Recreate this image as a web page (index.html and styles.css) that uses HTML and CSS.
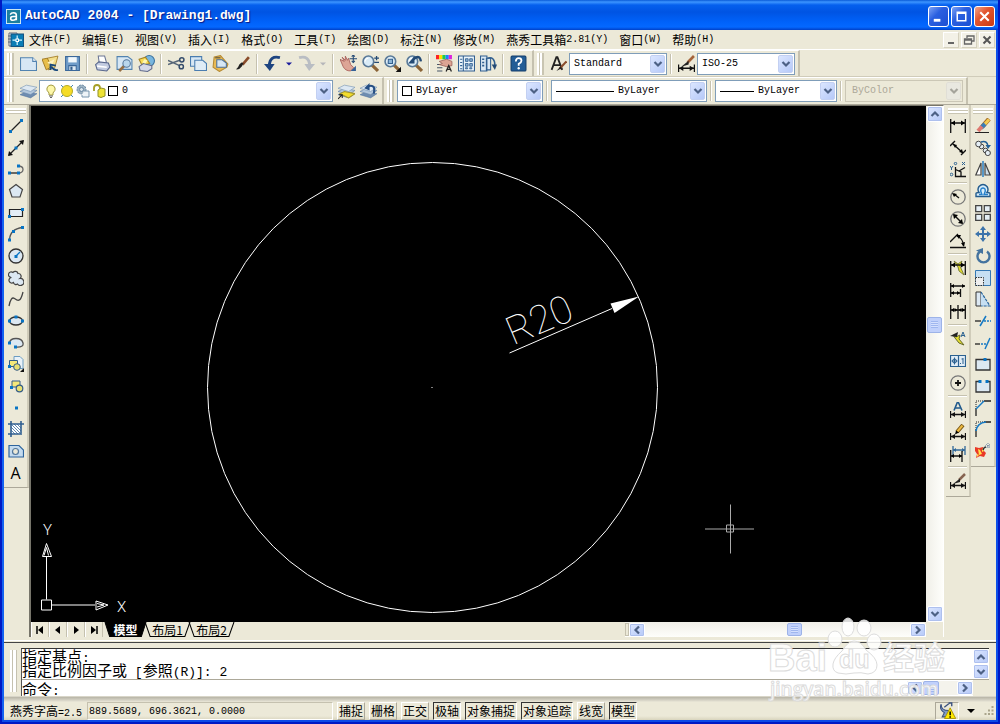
FILE: index.html
```html
<!DOCTYPE html>
<html lang="zh-CN">
<head>
  <meta charset="UTF-8" />
  <meta name="viewport" content="width=device-width, initial-scale=1.0" />
  <title>AutoCAD 2004 - [Drawing1.dwg]</title>
  <link rel="stylesheet" href="styles.css">
</head>
<body>
  <!-- Shared shapes -->
  <svg class="defs" width="0" height="0" aria-hidden="true">
    <symbol id="down" viewBox="0 0 10 10"><path d="M1.500 3 5 6.500 8.500 3" fill="none" stroke="#4d6185" stroke-width="2.200"/></symbol>
    <symbol id="up" viewBox="0 0 10 10"><path d="M1.500 7 5 3.500 8.500 7" fill="none" stroke="#4d6185" stroke-width="2.200"/></symbol>
    <symbol id="left" viewBox="0 0 10 10"><path d="M7 1.500 3.500 5 7 8.500" fill="none" stroke="#4d6185" stroke-width="2.200"/></symbol>
    <symbol id="right" viewBox="0 0 10 10"><path d="M3 1.500 6.500 5 3 8.500" fill="none" stroke="#4d6185" stroke-width="2.200"/></symbol>
    <symbol id="dim" viewBox="0 0 16 16"><path d="M.5 9v7M15.500 9v7M1 12.500h14" stroke="#111" fill="none" stroke-width="1.300"/><path d="M1 12.500l4-2.500v5zM15 12.500l-4-2.500v5z" fill="#111"/></symbol>
    <symbol id="layers" viewBox="0 0 16 16"><path d="M0 11l6-3 10 2-6 4z" fill="#6f8db0" stroke="#5577a0" stroke-width=".5"/><path d="M0 8l6-3 10 2-6 4z" fill="#b4c8dc" stroke="#6585aa" stroke-width=".6"/><path d="M0 5l6-3 10 2-6 4z" fill="#dde8f2" stroke="#7895b5" stroke-width=".6"/></symbol>
    <symbol id="lens" viewBox="0 0 16 16"><path d="M9 9l6 6" stroke="#8b6438" stroke-width="3"/><circle cx="6" cy="6" r="5" fill="#d9ebf7" stroke="#597998" stroke-width="1.500"/><path d="M3 6a3 3 0 0 1 3-3" stroke="#fff" fill="none"/></symbol>
  </svg>

  <div class="window">
    <header class="titlebar">
      <svg class="app-icon" viewBox="0 0 16 16"><rect x=".5" y=".5" width="15" height="15" fill="#1b7f9f" stroke="#d5eef5"/><path d="M4.500 6q1-2 3.500-2 3 0 3 2.500V12M11 8H7.500Q5 8 5 10t2.500 2Q10 12 11 10" fill="none" stroke="#fff" stroke-width="1.700"/></svg>
      <h1>AutoCAD 2004 - [Drawing1.dwg]</h1>
      <div class="win-btns">
        <button class="win-btn" aria-label="最小化"><svg viewBox="0 0 18 18"><path d="M4 13h7" stroke="#fff" stroke-width="3"/></svg></button>
        <button class="win-btn" aria-label="最大化"><svg viewBox="0 0 18 18"><path d="M4.500 4.500h9v9h-9z M4 5.500h10" fill="none" stroke="#fff" stroke-width="1.600"/></svg></button>
        <button class="win-btn close" aria-label="关闭"><svg viewBox="0 0 18 18"><path d="M4.500 4.500l9 9M13.500 4.500l-9 9" stroke="#fff" stroke-width="2.200"/></svg></button>
      </div>
    </header>

    <nav class="menubar">
      <svg class="doc-icon" viewBox="0 0 16 16"><path d="M1 1h8v13H1z" fill="#fff" stroke="#667"/><path d="M0 4h4M0 7h4M0 10h4" stroke="#567"/><rect x="3" y="2" width="12.500" height="12.500" fill="#0b7db5" stroke="#15537f"/><path d="M9.200 3.500v9.500M4.500 8.200h9.500" stroke="#d9f6ff" stroke-width="1.200"/><rect x="8" y="7" width="2.500" height="2.500" fill="#0b7db5" stroke="#fff"/></svg>
      <button class="menu">文件<span>(F)</span></button>
      <button class="menu">编辑<span>(E)</span></button>
      <button class="menu">视图<span>(V)</span></button>
      <button class="menu">插入<span>(I)</span></button>
      <button class="menu">格式<span>(O)</span></button>
      <button class="menu">工具<span>(T)</span></button>
      <button class="menu">绘图<span>(D)</span></button>
      <button class="menu">标注<span>(N)</span></button>
      <button class="menu">修改<span>(M)</span></button>
      <button class="menu">燕秀工具箱<span>2.81(Y)</span></button>
      <button class="menu">窗口<span>(W)</span></button>
      <button class="menu">帮助<span>(H)</span></button>
      <div class="mdi-btns">
        <button class="mdi-btn" aria-label="最小化图形"><svg viewBox="0 0 14 14"><path d="M4 10h6" stroke="#666" stroke-width="2"/></svg></button>
        <button class="mdi-btn" aria-label="还原图形"><svg viewBox="0 0 14 14"><path d="M5 5V3h7v5h-2M5 3h7M2.500 6h7v5h-7zM2.500 7h7" fill="none" stroke="#666" stroke-width="1.300"/></svg></button>
        <button class="mdi-btn" aria-label="关闭图形"><svg viewBox="0 0 14 14"><path d="M3.500 3.500l7 7M10.500 3.500l-7 7" stroke="#555" stroke-width="2"/></svg></button>
      </div>
    </nav>

    <!-- Standard + styles toolbars -->
    <div class="toolrow">
      <div class="toolbar">
        <i class="grip"></i>
        <button class="tool" aria-label="新建"><svg viewBox="0 0 16 16"><path d="M.5 2.500H12l3.500 3.500v8.500H.5z" fill="#d7e7f4" stroke="#5283b0"/><path d="M12 2.500V6h3.500" fill="#fff" stroke="#5283b0"/></svg></button>
        <button class="tool" aria-label="打开"><svg viewBox="0 0 16 16"><path d="M5 3l10-2-3 11-6 2z" fill="#f4df8b" stroke="#a07a22" stroke-width=".8"/><path d="M0 4l5-1 4 8-5 3z" fill="#e7bd49" stroke="#98701b" stroke-width=".8"/><path d="M5 7l7-3-3 6z" fill="#fff3c0"/><path d="M15 14q-4 1-6-3M8 14v-5l5 1" stroke="#18487c" stroke-width="1.700" fill="none"/></svg></button>
        <button class="tool" aria-label="保存"><svg viewBox="0 0 16 16"><path d="M1.500 1.500h13v13h-13z" fill="#6f9cc9" stroke="#3b689a"/><path d="M4 2h8v5H4z" fill="#f1f7fb"/><path d="M4.500 10h7v4.500h-7z" fill="#dce8f2" stroke="#3b689a"/><path d="M6 11h2v3H6z" fill="#315d8e"/></svg></button>
        <i class="sep"></i>
        <button class="tool" aria-label="打印"><svg viewBox="0 0 16 16"><path d="M4 1h6l2 7H5z" fill="#fff" stroke="#6c7795"/><path d="M1.500 9l3-2.500 9 1 1.500 4-3 3.500-9-1z" fill="#c2cbe0" stroke="#59678d"/><path d="M3 10.500l9 1" stroke="#fff" stroke-width="1.500"/></svg></button>
        <button class="tool" aria-label="打印预览"><svg viewBox="0 0 16 16"><path d="M1 1.500h10l4 3v9H1z" fill="#d7e7f4" stroke="#5283b0"/><path d="M9 9l-6 6" stroke="#966e43" stroke-width="2.500"/><circle cx="10" cy="8" r="3.500" fill="#b9d6ec" stroke="#55779a"/></svg></button>
        <button class="tool" aria-label="发布"><svg viewBox="0 0 16 16"><circle cx="10.500" cy="5.500" r="5" fill="#78b6df" stroke="#3a719e"/><path d="M1 4l6-2 4 6-7 2z" fill="#f7dc55" stroke="#a78424"/><path d="M1 11l4-3 8 2v3l-4 2.500-7-1z" fill="#d5d9e8" stroke="#616b8c"/><path d="M6 4l3 1-2 3-3-1z" fill="#fff6b0"/></svg></button>
        <i class="sep"></i>
        <button class="tool" aria-label="剪切"><svg viewBox="0 0 16 16"><path d="M0 5l11 5M0 9l11-4" stroke="#566678" stroke-width="1.400"/><circle cx="13" cy="4.500" r="2" fill="none" stroke="#344c6c" stroke-width="1.400"/><circle cx="12.500" cy="11" r="2" fill="none" stroke="#344c6c" stroke-width="1.400"/></svg></button>
        <button class="tool" aria-label="复制"><svg viewBox="0 0 16 16"><path d="M.5 1.500H11v9H.5z" fill="#d7e7f4" stroke="#4a7db0"/><path d="M4.500 5H12l3.500 3v6.500h-11z" fill="#dfecf6" stroke="#4a7db0"/></svg></button>
        <button class="tool" aria-label="粘贴"><svg viewBox="0 0 16 16"><path d="M2 2l6-1.500 7 8-1 3-7 4-6-4z" fill="#e9bb55" stroke="#b58b35"/><path d="M4.500 4.500h5l4 3v4h-9z" fill="#d7e7f4" stroke="#4a6f99"/><path d="M3 2.500h5" stroke="#7a6a43" stroke-width="1.500"/></svg></button>
        <button class="tool" aria-label="特性匹配"><svg viewBox="0 0 16 16"><path d="M14 2L8 9" stroke="#8a4c2b" stroke-width="2.500"/><path d="M9 7.500L7.500 10.500Q5 14 2 13.500q2-1.500 3-4.500L7 7z" fill="#222"/></svg></button>
        <i class="sep"></i>
        <button class="tool" aria-label="放弃"><svg viewBox="0 0 16 16"><path d="M15 2.500Q5.500 0 5 10" fill="none" stroke="#1d4480" stroke-width="2.800"/><path d="M0 8.500h10L5.500 15z" fill="#1d4480"/></svg></button>
        <button class="tool tiny" aria-label="放弃列表"><svg viewBox="0 0 8 8"><path d="M1 2.500h6L4 5.500z" fill="#17199b"/></svg></button>
        <button class="tool" aria-label="重做"><svg viewBox="0 0 16 16"><path d="M1 2.500Q10.500 0 11 10" fill="none" stroke="#b9bdc3" stroke-width="2.800"/><path d="M6 8.500h10L10.500 15z" fill="#b9bdc3"/></svg></button>
        <button class="tool tiny" aria-label="重做列表"><svg viewBox="0 0 8 8"><path d="M1 2.500h6L4 5.500z" fill="#b5b6b9"/></svg></button>
        <i class="sep"></i>
        <button class="tool" aria-label="实时平移"><svg viewBox="0 0 16 16"><path d="M0 4l4 2-2-4 3 3 0-4 2 4 1-2 2 6 3 3-3 3q-5 0-7-4z" fill="#dda596" stroke="#a75d59" stroke-width=".8"/><path d="M10 15l5-5v5z" fill="#335f96"/><path d="M12.500 0v7M9 3.500h7" stroke="#244a75"/><path d="M11 1.500L12.500 0 14 1.500M11 5.500L12.500 7 14 5.500" stroke="#244a75" fill="none"/></svg></button>
        <button class="tool" aria-label="实时缩放"><svg viewBox="0 0 16 16"><use href="#lens"/><path d="M11.500 3H16M13.700 1v4M11.500 7H16" stroke="#244a75" stroke-width="1.200"/></svg></button>
        <button class="tool" aria-label="窗口缩放"><svg viewBox="0 0 16 16"><use href="#lens"/><path d="M4 4h4v4H4z" fill="#8bb5d8" stroke="#335f8d"/><path d="M16 11v5h-5z" fill="#111"/></svg></button>
        <button class="tool" aria-label="缩放上一个"><svg viewBox="0 0 16 16"><use href="#lens"/><path d="M14 6Q13-1 7 4" fill="none" stroke="#244a75" stroke-width="2.200"/><path d="M8 1v7H2z" fill="#244a75"/></svg></button>
        <i class="sep"></i>
        <button class="tool" aria-label="特性"><svg viewBox="0 0 16 16"><path d="M0 0h3v4H0z" fill="#f22"/><path d="M3 0h3v4H3z" fill="#fd0"/><path d="M6 0h3v4H6z" fill="#2c4"/><path d="M9 0h3v4H9z" fill="#18f"/><path d="M12 0h3v4h-3z" fill="#d2d"/><path d="M1 9h5M1 12h5M1 15h5" stroke="#456"/><path d="M3 6l7-2 5 2v4l-5 1-7-2 3-1z" fill="#dca493" stroke="#955b53" stroke-width=".7"/><path d="M9.500 15.500L12 10l2.500 5.500M10.500 13.500h3" stroke="#222" stroke-width="1.200" fill="none"/></svg></button>
        <button class="tool" aria-label="设计中心"><svg viewBox="0 0 16 16"><path d="M.5 1h15v14H.5z" fill="#eaf4fa" stroke="#315f90"/><path d="M5 1v14" stroke="#315f90"/><path d="M2 4h2M2 7h2M2 10h2M2 13h2" stroke="#315f90"/><path d="M7 3.500h2.500v2.500H7zM11 3.500h2.500v2.500H11zM7 8h2.500v2.500H7zM11 8h2.500v2.500H11zM7 12h2v1H7zM11 12h2v1h-2z" fill="#8fb4d4" stroke="#315f90" stroke-width=".8"/></svg></button>
        <button class="tool" aria-label="工具选项板"><svg viewBox="0 0 16 16"><path d="M.5 1h6v14h-6zM6 3h4v11H6z" fill="#dbe9f4" stroke="#315f90"/><path d="M2 4h2M2 7h2M2 10h2" stroke="#315f90" stroke-width="1.500"/><path d="M7 3q7-2 7 7" fill="none" stroke="#315f90" stroke-width="1.500"/><path d="M11 9h5l-2 5z" fill="#244a75"/></svg></button>
        <i class="sep"></i>
        <button class="tool" aria-label="帮助"><svg viewBox="0 0 16 16"><rect x="1" y="1" width="14" height="14" rx="1" fill="#235d96" stroke="#123d6b"/><path d="M5.500 6q0-3 2.700-3 2.600 0 2.600 2.300 0 1.700-2.600 3V10" fill="none" stroke="#fff" stroke-width="1.700"/><circle cx="8.200" cy="12.500" r="1.100" fill="#fff"/></svg></button>
      </div>
      <div class="toolbar">
        <i class="grip"></i>
        <button class="tool" aria-label="文字样式"><svg viewBox="0 0 16 16"><path d="M1.500 14L6 2h1l4.500 12M3.500 9.500h6" fill="none" stroke="#222" stroke-width="1.700"/><path d="M15.500 6L9 13" stroke="#8a4c2b" stroke-width="2"/><path d="M10 10.500l-4 4.500 5-2.500z" fill="#222"/></svg></button>
        <label class="combo w98"><select aria-label="文字样式"><option>Standard</option></select><span class="arrow"><svg><use href="#down"/></svg></span></label>
        <i class="sep"></i>
        <button class="tool" aria-label="标注样式"><svg viewBox="0 0 16 16"><use href="#dim"/><path d="M15 1L9 7" stroke="#a5633a" stroke-width="2.500"/><path d="M10 5.500L3 11l7-2z" fill="#222"/></svg></button>
        <label class="combo w98"><select aria-label="标注样式"><option>ISO-25</option></select><span class="arrow"><svg><use href="#down"/></svg></span></label>
      </div>
    </div>

    <!-- Layers + properties toolbars -->
    <div class="toolrow">
      <div class="toolbar">
        <i class="grip"></i>
        <button class="tool" aria-label="图层特性管理器"><svg viewBox="0 0 16 16"><use href="#layers"/></svg></button>
        <label class="combo layer">
          <svg viewBox="0 0 14 14"><path d="M5 9q-3-3-2-5 1-3 4-3t4 3q1 2-2 5v2H5z" fill="#fdf7a9" stroke="#a39b43"/><path d="M5 12h4M6 13.500h2" stroke="#666"/></svg>
          <svg viewBox="0 0 14 14"><path d="M1 1l12 12M13 1L1 13" stroke="#4486b2"/><circle cx="7" cy="7" r="5.500" fill="#f5dc27" stroke="#b7ab24"/></svg>
          <svg viewBox="0 0 14 14"><circle cx="5.500" cy="5.500" r="4.500" fill="#9eb3c2" stroke="#6888a5" stroke-dasharray="2 1"/><circle cx="5.500" cy="5.500" r="2" fill="#dbe5ec" stroke="#6888a5"/><path d="M8 7h5v6H6v-2" fill="#eef4f8" stroke="#7794ad"/></svg>
          <svg viewBox="0 0 14 14"><path d="M2 7V4q0-3 3-3t3 3v3" fill="none" stroke="#a69f26" stroke-width="1.800"/><path d="M6 6l3-2 4 1v7l-4 1.500-3-1z" fill="#eee337" stroke="#929027"/></svg>
          <i class="swatch"></i>
          <select aria-label="图层"><option>0</option></select><span class="arrow"><svg><use href="#down"/></svg></span>
        </label>
        <i class="gap"></i>
        <button class="tool" aria-label="将对象的图层置为当前"><svg viewBox="0 0 16 16"><use href="#layers"/><path d="M2 10l4-2 10 2-6 4z" fill="#f2dd2e" stroke="#a4942d"/><path d="M0 15l4-4m-3 0h3v3" stroke="#222" fill="none"/></svg></button>
        <button class="tool" aria-label="上一个图层"><svg viewBox="0 0 16 16"><use href="#layers"/><path d="M13 10Q15 1 8 3" fill="none" stroke="#254e83" stroke-width="2"/><path d="M9 0v7L4 5z" fill="#254e83"/></svg></button>
      </div>
      <div class="toolbar">
        <i class="grip"></i>
        <label class="combo w146"><i class="swatch"></i><select aria-label="颜色"><option>ByLayer</option></select><span class="arrow"><svg><use href="#down"/></svg></span></label>
        <i class="sep"></i>
        <label class="combo w156"><i class="line long"></i><select aria-label="线型"><option>ByLayer</option></select><span class="arrow"><svg><use href="#down"/></svg></span></label>
        <i class="sep"></i>
        <label class="combo w122"><i class="line"></i><select aria-label="线宽"><option>ByLayer</option></select><span class="arrow"><svg><use href="#down"/></svg></span></label>
        <i class="sep"></i>
        <label class="combo w118 off"><select aria-label="打印样式" disabled><option>ByColor</option></select><span class="arrow"><svg><use href="#down"/></svg></span></label>
      </div>
    </div>

    <main class="workspace">
      <!-- Draw toolbar -->
      <div class="palette draw">
        <i class="grip"></i>
        <button class="tool" aria-label="直线"><svg viewBox="0 0 16 16"><path d="M2 14L14 2" stroke="#222" stroke-width="1.300"/><path d="M1 12h3v3H1zM12 1h3v3h-3z" fill="#0874c4"/></svg></button>
        <button class="tool" aria-label="构造线"><svg viewBox="0 0 16 16"><path d="M1 15L15 1" stroke="#222" stroke-width="1.300"/><path d="M0 16l1-5 4 4zM16 0l-5 1 4 4z" fill="#111"/><path d="M6.500 6.500h3v3h-3z" fill="#0874c4"/></svg></button>
        <button class="tool" aria-label="多段线"><svg viewBox="0 0 16 16"><path d="M1 12h9" stroke="#222" stroke-width="1.300"/><path d="M10 12q5 0 5-3.500T10 5" fill="none" stroke="#666" stroke-width="1.300"/><path d="M0 10.500h3v3H0zM9 10.500h3v3H9zM9 3.500h3v3H9z" fill="#0874c4"/></svg></button>
        <button class="tool" aria-label="正多边形"><svg viewBox="0 0 16 16"><path d="M8 1.500l6.500 5L12 14H4L1.500 6.500z" fill="#dce8f2" stroke="#444" stroke-width="1.200"/></svg></button>
        <button class="tool" aria-label="矩形"><svg viewBox="0 0 16 16"><path d="M1.500 4.500h13v7h-13z" fill="#e3edf6" stroke="#222" stroke-width="1.200"/><path d="M0 10h3v3H0zM13 3h3v3h-3z" fill="#0874c4"/></svg></button>
        <button class="tool" aria-label="圆弧"><svg viewBox="0 0 16 16"><path d="M1.500 14Q2 3 14.500 1.500" fill="none" stroke="#555" stroke-width="1.300"/><path d="M0 12.500h3v3H0zM4 4h3v3H4zM13 0h3v3h-3z" fill="#0874c4"/></svg></button>
        <button class="tool" aria-label="圆"><svg viewBox="0 0 16 16"><circle cx="8" cy="8" r="7" fill="#dce8f2" stroke="#333" stroke-width="1.300"/><path d="M8 8l4-4" stroke="#0874c4" stroke-width="1.300"/><path d="M6.500 7h3v3h-3z" fill="#0874c4"/></svg></button>
        <button class="tool" aria-label="修订云线"><svg viewBox="0 0 16 16"><path d="M3.500 7.500A2.800 2.800 0 1 1 5 2.500 2.800 2.800 0 0 1 10 3.500 2.800 2.800 0 0 1 12 8.500 3.500 3.500 0 1 1 9.500 14 2.500 2.500 0 0 1 5.500 12.500 2.800 2.800 0 1 1 3.500 7.500z" fill="#dce8f2" stroke="#444" stroke-width="1.200"/></svg></button>
        <button class="tool" aria-label="样条曲线"><svg viewBox="0 0 16 16"><path d="M1 15Q3 5 6.500 7.500T11 9q2 0 4-8" fill="none" stroke="#444" stroke-width="1.300"/></svg></button>
        <button class="tool" aria-label="椭圆"><svg viewBox="0 0 16 16"><ellipse cx="8" cy="8" rx="6.500" ry="4" fill="#dce8f2" stroke="#333" stroke-width="1.300"/><path d="M0 6.500h3v3H0zM13 6.500h3v3h-3zM6.500 2.500h3v3h-3z" fill="#0874c4"/></svg></button>
        <button class="tool" aria-label="椭圆弧"><svg viewBox="0 0 16 16"><path d="M1.500 8Q2 3.500 8 3.500T15 8t-7 4" fill="#dce8f2" stroke="#555" stroke-width="1.300"/><path d="M0 6.500h3v3H0zM6 10.500h3v3H6z" fill="#0874c4"/></svg></button>
        <button class="tool" aria-label="插入块"><svg viewBox="0 0 16 16"><path d="M6 .5h6l3 3v9H6z" fill="#e8f1f8" stroke="#6b9cc2"/><path d="M1.500 4.500h8v6h-8z" fill="#f4e879" stroke="#345d86"/><circle cx="9" cy="11" r="3.300" fill="#e8df71" stroke="#345d86"/><path d="M0 9h3v3H0z" fill="#0874c4"/><path d="M16 12v4h-4z" fill="#111"/></svg></button>
        <button class="tool" aria-label="创建块"><svg viewBox="0 0 16 16"><path d="M4 3h8v6H4z" fill="#f4e879" stroke="#345d86"/><circle cx="11.500" cy="10.500" r="3.300" fill="#e8df71" stroke="#345d86" stroke-width="1.200"/><path d="M2 8h3v3H2z" fill="#0874c4"/></svg></button>
        <button class="tool" aria-label="点"><svg viewBox="0 0 16 16"><path d="M7 6.500h3v3H7z" fill="#0874c4"/></svg></button>
        <button class="tool" aria-label="图案填充"><svg viewBox="0 0 16 16"><path d="M3 3h10v10H3z" fill="#fff"/><path d="M3 6l7 7M3 9l4 4M6 3l7 7M9 3l4 4M3 3l10 10" stroke="#4e7dab" stroke-width=".9"/><path d="M3 0v16M13 0v12M0 3h16M0 13h14" stroke="#315f90" stroke-width="1.600"/></svg></button>
        <button class="tool" aria-label="面域"><svg viewBox="0 0 16 16"><path d="M1 2.500h10l4.500 4.500v7H1z" fill="#c4dbef" stroke="#2e659e" stroke-width="1.200"/><circle cx="7.500" cy="8.500" r="3" fill="#ece9d8" stroke="#52779c" stroke-width="1.200"/></svg></button>
        <button class="tool letter" aria-label="多行文字">A</button>
      </div>

      <div class="doc">
        <div class="view">
          <svg class="drawing" viewBox="31 106 895 515" preserveAspectRatio="xMidYMid meet">
            <circle cx="432.500" cy="387" r="225" class="thin"/>
            <path d="M431.500 387h1" class="thin"/>
            <path d="M509.500 352.500L612 308" class="thin"/>
            <path d="M639 296l-28.500 7 4 9.500z" fill="#fff"/>
            <text class="dim-text" transform="translate(513 345) rotate(-23)">R20</text>

            <!-- UCS icon -->
            <path d="M41.500 599.500h10v10h-10zM46.500 599v-43M46.500 543l-4 13h9zM52 604.500h43M108 604.500l-12-4v9zM44 555l2.500-8 2 8M97 603l7 1.500-7 2" class="thin"/>
            <text class="axis" x="43" y="534">Y</text>
            <text class="axis" x="117" y="611">X</text>

            <!-- Crosshair -->
            <path d="M705 528.500h49M730.500 504v49M726.500 524.500h7v7h-7z" class="cross"/>
          </svg>
          <div class="vscroll">
            <button class="sbtn" aria-label="向上"><svg><use href="#up"/></svg></button>
            <i class="thumb"></i>
            <button class="sbtn" aria-label="向下"><svg><use href="#down"/></svg></button>
          </div>
        </div>
        <div class="tabs">
          <button class="nav" aria-label="第一个"><svg viewBox="0 0 10 10"><path d="M2 1v8" stroke="#000" stroke-width="1.500"/><path d="M8 1v8L3 5z"/></svg></button>
          <button class="nav" aria-label="上一个"><svg viewBox="0 0 10 10"><path d="M7 1v8L2 5z"/></svg></button>
          <button class="nav" aria-label="下一个"><svg viewBox="0 0 10 10"><path d="M3 1v8l5-4z"/></svg></button>
          <button class="nav" aria-label="最后一个"><svg viewBox="0 0 10 10"><path d="M8 1v8" stroke="#000" stroke-width="1.500"/><path d="M2 1v8l5-4z"/></svg></button>
          <button class="tab active"><svg viewBox="0 0 46 14" preserveAspectRatio="none"><path d="M1 0l5 13.500h34L45 0"/></svg><span>模型</span></button>
          <button class="tab"><svg viewBox="0 0 46 14" preserveAspectRatio="none"><path d="M1 0l5 13.500h34L45 0"/></svg><span>布局1</span></button>
          <button class="tab"><svg viewBox="0 0 46 14" preserveAspectRatio="none"><path d="M1 0l5 13.500h34L45 0"/></svg><span>布局2</span></button>
          <div class="hscroll">
            <i class="split"></i>
            <button class="sbtn" aria-label="向左"><svg><use href="#left"/></svg></button>
            <i class="thumb"></i>
            <button class="sbtn" aria-label="向右"><svg><use href="#right"/></svg></button>
          </div>
        </div>
      </div>

      <!-- Dimension toolbar -->
      <div class="palette dims">
        <i class="grip"></i>
        <button class="tool" aria-label="线性标注"><svg viewBox="0 0 16 16"><path d="M.7 1v14M15.300 1v14M1 5h14" stroke="#111" stroke-width="1.300"/><path d="M1 5l4-2.500v5zM15 5l-4-2.500v5z"/></svg></button>
        <button class="tool" aria-label="对齐标注"><svg viewBox="0 0 16 16"><path d="M3 4l10 9M0 6l5-5M11 15l5-5" stroke="#111" stroke-width="1.400"/><path d="M3 4l4 1-2 3zM13 13l-4-1 3-3z"/></svg></button>
        <button class="tool" aria-label="坐标标注"><svg viewBox="0 0 16 16"><path d="M5.500 5v9.500H16M5.500 7.500L11 10v4.500M9 9l6-3.500" fill="none" stroke="#111" stroke-width="1.300"/><path d="M0 4l1.500 2L3 4M1.500 6v2M12 0l3 3M15 0l-3 3" stroke="#2b6190" fill="none"/><circle cx="1.500" cy="12.500" r="1.300" fill="none" stroke="#2b6190"/><circle cx="5.500" cy="1.500" r="1.200" fill="none" stroke="#2b6190"/></svg></button>
        <i class="hsep"></i>
        <button class="tool" aria-label="半径标注"><svg viewBox="0 0 16 16"><circle cx="8" cy="8" r="7.200" fill="none" stroke="#777" stroke-width="1.300"/><path d="M9 9L4 5" stroke="#111" stroke-width="1.400"/><path d="M2 4l5 1-3 3z"/></svg></button>
        <button class="tool" aria-label="直径标注"><svg viewBox="0 0 16 16"><circle cx="8" cy="8" r="7.200" fill="none" stroke="#777" stroke-width="1.300"/><path d="M4 4l8 8" stroke="#111" stroke-width="1.400"/><path d="M3 3l5 1-4 4zM13 13l-5-1 4-4z"/></svg></button>
        <button class="tool" aria-label="角度标注"><svg viewBox="0 0 16 16"><path d="M0 14.500h16M0 9l8-8M7 3q6 2 6.500 10" fill="none" stroke="#111" stroke-width="1.300"/><path d="M6 2l5 0-2 4zM14 14l-3-4 4-1z"/></svg></button>
        <i class="hsep"></i>
        <button class="tool" aria-label="快速标注"><svg viewBox="0 0 16 16"><path d="M4 1l4 3 4-3-2 5 4 9-5-4-1-4z" fill="#e4df2f" stroke="#66682b" stroke-width=".8"/><path d="M.7 1v14M15.300 1v14M1 5h14" stroke="#111" stroke-width="1.300"/><path d="M1 5l4-2.500v5zM15 5l-4-2.500v5z"/></svg></button>
        <button class="tool" aria-label="基线标注"><svg viewBox="0 0 16 16"><path d="M.7 1v14M1 4h14M1 11h9M10.500 7v8" stroke="#111" stroke-width="1.300"/><path d="M1 4l3-2v4zM15 4l-3-2v4zM1 11l3-2v4zM10 11l-3-2v4z"/></svg></button>
        <button class="tool" aria-label="连续标注"><svg viewBox="0 0 16 16"><path d="M.7 1v14M8 1v14M15.300 1v14M1 6h14" stroke="#111" stroke-width="1.300"/><path d="M1 6l3-2v4zM15 6l-3-2v4zM7.500 6l-3-2v4zM8.500 6l3-2v4z"/></svg></button>
        <i class="hsep"></i>
        <button class="tool" aria-label="快速引线"><svg viewBox="0 0 16 16"><path d="M3 4l3 2 4-2-1 4 5 6-5-2-4-5z" fill="#e4df2f" stroke="#66682b"/><path d="M0 5l8-4-1 5z" fill="#222"/><path d="M11 6l2-5 2 5M12 4.500h2.500" stroke="#2b6190" fill="none"/></svg></button>
        <button class="tool" aria-label="公差"><svg viewBox="0 0 16 16"><path d="M.5 2.500h15v11H.5zM8.500 2.500v11" fill="#e1edf6" stroke="#2b6190" stroke-width="1.200"/><circle cx="4.500" cy="8" r="2" fill="none" stroke="#2b6190"/><path d="M4.500 4.500v7M1.500 8h6M10 10.500h1M13 5v6M11.500 6H13" stroke="#2b6190" fill="none"/></svg></button>
        <button class="tool" aria-label="圆心标记"><svg viewBox="0 0 16 16"><circle cx="8" cy="8" r="7.200" fill="none" stroke="#777" stroke-width="1.300"/><path d="M8 5v6M5 8h6" stroke="#111" stroke-width="1.800"/></svg></button>
        <i class="hsep"></i>
        <button class="tool" aria-label="编辑标注"><svg viewBox="0 0 16 16"><use href="#dim"/><path d="M4 8.500L7.500 0h.7L12 8.500M5.500 6h5" fill="none" stroke="#225a8c" stroke-width="1.600"/></svg></button>
        <button class="tool" aria-label="编辑标注文字"><svg viewBox="0 0 16 16"><use href="#dim"/><path d="M13 1L7 8" stroke="#775512" stroke-width="4"/><path d="M12.500 1.500L7 8" stroke="#eebb42" stroke-width="2"/><path d="M5 10.500l1-4 3 2z"/></svg></button>
        <button class="tool" aria-label="标注更新"><svg viewBox="0 0 16 16"><path d="M3 0v9M15 0v9M3 4h12" stroke="#326999" stroke-width="1.300"/><path d="M3 4l3-2v4zM15 4l-3-2v4z" fill="#326999"/><path d="M.7 4v12M12 5v11M1 10h11" stroke="#111" stroke-width="1.300"/><path d="M1 10l3-2v4zM12 10L9 8v4z"/></svg></button>
        <i class="hsep"></i>
        <button class="tool" aria-label="标注样式管理"><svg viewBox="0 0 16 16"><use href="#dim"/><path d="M15 1L9 7" stroke="#876451" stroke-width="2.500"/><path d="M10 5.500L3 11l7-2z" fill="#222"/></svg></button>
      </div>

      <!-- Modify toolbar -->
      <div class="palette modify">
        <i class="grip"></i>
        <button class="tool" aria-label="删除"><svg viewBox="0 0 16 16"><path d="M14 1L7 9" stroke="#a36b24" stroke-width="4.500"/><path d="M14 1.500L9 7" stroke="#f4cb52" stroke-width="3"/><path d="M10 6L6 10" stroke="#397bb8" stroke-width="4"/><path d="M7 8.500L3 13" stroke="#df7970" stroke-width="4"/><path d="M0 14.500h14" stroke="#222"/></svg></button>
        <button class="tool" aria-label="复制对象"><svg viewBox="0 0 16 16"><circle cx="6.500" cy="6.500" r="2.300" fill="#e5eef5" stroke="#444"/><circle cx="3.500" cy="4" r="2.800" fill="#e5eef5" stroke="#444"/><circle cx="10.500" cy="10.500" r="2.300" fill="#e5eef5" stroke="#444"/><circle cx="12.800" cy="13" r="2.600" fill="#e5eef5" stroke="#444"/><path d="M6 2q6-2 7 4" fill="none" stroke="#235f96" stroke-width="1.500"/><path d="M10.500 5H16l-3 4z" fill="#235f96"/></svg></button>
        <button class="tool" aria-label="镜像"><svg viewBox="0 0 16 16"><path d="M6 2v12H.8z" fill="#fff" stroke="#444" stroke-width="1.200"/><path d="M10 2v12h5.200z" fill="#cbdce9" stroke="#444" stroke-width="1.200"/><path d="M8 0v16" stroke="#1b76c1" stroke-width="1.400"/></svg></button>
        <button class="tool" aria-label="偏移"><svg viewBox="0 0 16 16"><path d="M1 13.500h14v-3q0-1-3-1 2-3 0-6-4-4-8 0-2 3 0 6-3 0-3 1z" fill="#d8edfb" stroke="#235b8d" stroke-width="1.400"/><path d="M4 11.500h3Q5 8 6 6q2-2 4 0 1 2-1 5.500h4" fill="none" stroke="#2681cb" stroke-width="1.300"/></svg></button>
        <button class="tool" aria-label="阵列"><svg viewBox="0 0 16 16"><path d="M.7.7h6v6h-6zM9.300.7h6v6h-6zM.7 9.300h6v6h-6zM9.300 9.300h6v6h-6z" fill="#e5eef5" stroke="#444" stroke-width="1.300"/></svg></button>
        <button class="tool" aria-label="移动"><svg viewBox="0 0 16 16"><path d="M8 2v12M2 8h12" stroke="#3c73ab" stroke-width="2"/><path d="M8 0l3 4H5zM8 16l3-4H5zM0 8l4-3v6zM16 8l-4-3v6z" fill="#3c73ab"/></svg></button>
        <button class="tool" aria-label="旋转"><svg viewBox="0 0 16 16"><path d="M5 3.500a6 6 0 1 0 7 0" fill="none" stroke="#44739f" stroke-width="2.400"/><path d="M1 2.500L8 0v6z" fill="#44739f"/></svg></button>
        <button class="tool" aria-label="缩放"><svg viewBox="0 0 16 16"><path d="M.5.500h15v15H.5z" fill="#c6dff2" stroke="#3578b4"/><path d="M.5 7.500h8v8h-8z" fill="#eee" stroke="#333" stroke-dasharray="1.500 1"/></svg></button>
        <button class="tool" aria-label="拉伸"><svg viewBox="0 0 16 16"><path d="M1 1h5v14H1z" fill="#dce8f2" stroke="#333"/><path d="M6 1l9 14H6" fill="#c6dff2" stroke="#28649b" stroke-width="1.200" stroke-dasharray="3 1"/></svg></button>
        <button class="tool" aria-label="修剪"><svg viewBox="0 0 16 16"><path d="M0 8h6" stroke="#222" stroke-width="1.300"/><path d="M9 8h7" stroke="#167ac4" stroke-width="1.300" stroke-dasharray="2 1"/><path d="M5 13L11 3" stroke="#167ac4" stroke-width="1.500"/></svg></button>
        <button class="tool" aria-label="延伸"><svg viewBox="0 0 16 16"><path d="M0 9h5" stroke="#222" stroke-width="1.300"/><path d="M6 9h6" stroke="#167ac4" stroke-width="1.300" stroke-dasharray="2 1"/><path d="M10 14L15 3" stroke="#167ac4" stroke-width="1.500"/></svg></button>
        <button class="tool" aria-label="打断于点"><svg viewBox="0 0 16 16"><path d="M1 3.500h14v10.500H1z" fill="#dce8f2" stroke="#333" stroke-width="1.300"/><path d="M8.500 2h3v3h-3z" fill="#0874c4"/></svg></button>
        <button class="tool" aria-label="打断"><svg viewBox="0 0 16 16"><path d="M4 3.500H1V14h14V3.500h-3" fill="#dce8f2" stroke="#333" stroke-width="1.300"/><path d="M3.500 2h3v3h-3zM10.500 2h3v3h-3z" fill="#0874c4"/></svg></button>
        <button class="tool" aria-label="倒角"><svg viewBox="0 0 16 16"><path d="M1 8v8M9 1h7" stroke="#222" stroke-width="1.300"/><path d="M1 7V1h7" fill="none" stroke="#222" stroke-dasharray="1 1"/><path d="M1 9l8-8" stroke="#167ac4" stroke-width="1.500"/></svg></button>
        <button class="tool" aria-label="圆角"><svg viewBox="0 0 16 16"><path d="M1 8v8M9 1h7" stroke="#222" stroke-width="1.300"/><path d="M1 7V1h7" fill="none" stroke="#222" stroke-dasharray="1 1"/><path d="M1 10q1-8 10-9" fill="none" stroke="#167ac4" stroke-width="1.700"/></svg></button>
        <button class="tool" aria-label="分解"><svg viewBox="0 0 16 16"><path d="M0 4l4 1 4-1 1 4 2 2-2 4-4-1-4 2 1-4-2-3z" fill="#e93827"/><path d="M3 6l2 1 2 4-3 1zM7 5l2 3-2 1zM2 11l2 1-2 2z" fill="#ffe14b"/><path d="M8 7q1-3 3-3" fill="none" stroke="#333" stroke-width="1.500"/><path d="M11 1l4 4M15 1l-4 4M13 0v6M10 3h6" stroke="#6d87a7" stroke-dasharray="1 1"/></svg></button>
      </div>
    </main>

    <section class="command">
      <i class="grip"></i>
      <div class="console">
        <div class="history">
          <div class="log">
            <p>指定基点<span>:</span></p>
            <p>指定比例因子或<span> [</span>参照<span>(R)]: 2</span></p>
          </div>
          <div class="log-scroll">
            <button class="sbtn" aria-label="向上滚动"><svg><use href="#up"/></svg></button>
            <button class="sbtn" aria-label="向下滚动"><svg><use href="#down"/></svg></button>
          </div>
        </div>
        <div class="prompt">
          <label for="cmd">命令<span>:</span></label>
          <input type="text" id="cmd" />
          <div class="cmd-scroll">
            <button class="sbtn" aria-label="向左滚动"><svg><use href="#left"/></svg></button>
            <i class="thumb"></i>
            <button class="sbtn" aria-label="向右滚动"><svg><use href="#right"/></svg></button>
          </div>
        </div>
      </div>
    </section>

    <footer class="status">
      <span class="height">燕秀字高<span>=2.5</span></span>
      <output class="coords">889.5689, 696.3621, 0.0000</output>
      <button class="mode">捕捉</button>
      <button class="mode">栅格</button>
      <button class="mode">正交</button>
      <button class="mode on">极轴</button>
      <button class="mode on">对象捕捉</button>
      <button class="mode on">对象追踪</button>
      <button class="mode">线宽</button>
      <button class="mode on">模型</button>
      <div class="tray">
        <button class="tray-icon" aria-label="通讯中心"><svg viewBox="0 0 16 16"><path d="M2 2q0 6 7 6l2 3-2 3H3l2-4Q0 7 2 2z" fill="#8299c5" stroke="#3a517f"/><path d="M5 5l5-4M9 1h3v3" fill="none" stroke="#3a517f" stroke-width="1.300"/><path d="M10.500 5.500l5.200 10H5.200z" fill="#ffe900" stroke="#a18d00" stroke-width=".8"/><path d="M10.500 9v3.500M10.500 13.500v1.300" stroke="#000" stroke-width="1.400"/></svg></button>
        <button class="tray-menu" aria-label="状态栏菜单"><svg viewBox="0 0 8 8"><path d="M0 2h8L4 6z"/></svg></button>
        <svg class="resize" viewBox="0 0 12 12"><path d="M8.500 2h2M5 5.500h2M8.500 5.500h2M1.500 9h2M5 9h2M8.500 9h2" stroke="#aaa58c" stroke-width="2"/></svg>
      </div>
    </footer>
  </div>

  <!-- Watermark -->
  <svg class="mark" viewBox="0 0 190 90">
    <ellipse cx="67" cy="25" rx="7" ry="8"/>
    <ellipse cx="80" cy="13" rx="6" ry="9"/>
    <ellipse cx="96" cy="14" rx="7" ry="8"/>
    <ellipse cx="106" cy="28" rx="7" ry="8"/>
    <path d="M86 27q7 0 12 9 11 8 11 15 0 8-9 9-7-2-14-1-8 2-16 0-6-2-5-9 1-6 9-13 6-10 12-10z"/>
    <text class="brand" x="0" y="57">Bai</text>
    <text class="paw" x="71" y="54">du</text>
    <text class="cn" x="115" y="55">经验</text>
    <text class="url" x="2" y="82">jingyan.baidu.com</text>
  </svg>
</body>
</html>
```
FILE: styles.css
```css
:root {
  --face: #ece9d8;
  --shade: #aca899;
  --field: #7f9db9;
  --mono: "Liberation Mono", monospace;
  --cjk: "Noto Sans CJK SC", sans-serif;
}

* { margin: 0; padding: 0; box-sizing: border-box; }

body {
  position: relative;
  min-height: 100vh;
  display: flex;
  background: #0019c4;
  border: 2px solid #0019c4;
  border-top: 0;
  font-family: var(--cjk);
  font-size: 12px;
  line-height: 14px;
  color: #000;
}

button, input, select {
  font: inherit;
  color: inherit;
  background: none;
  border: 0;
  border-radius: 0;
}
button { display: flex; align-items: center; justify-content: center; }
svg { display: block; }
i { display: block; flex: none; }
.defs { position: absolute; }

.window {
  flex: 1;
  min-width: 0;
  display: flex;
  flex-direction: column;
  background: linear-gradient(90deg, #1462f0 2px, var(--face) 2px, var(--face) calc(100% - 2px), #0d4fe8 calc(100% - 2px));
  border-bottom: 2px solid #0c4ae6;
}
.window > * { margin: 0 2px; }

/* Title bar */
.window > .titlebar {
  margin: 0;
  height: 30px;
  display: flex;
  align-items: center;
  gap: 4px;
  padding: 2px 3px 0 4px;
  background: linear-gradient(#0a5bd8 0, #3d95ff 2px, #0560ee 5px, #0054e3 12px, #0062fa 22px, #0468ff 27px, #0040c8 30px);
}
.app-icon { width: 15px; height: 15px; }
.titlebar h1 {
  flex: 1;
  font: bold 13px/16px var(--mono);
  color: #fff;
  text-shadow: 1px 1px 1px #0a1883;
}
.win-btns { display: flex; gap: 2px; }
.win-btn {
  width: 21px;
  height: 21px;
  border: 1px solid #fff;
  border-radius: 3px;
  background: linear-gradient(135deg, #7ea3f5, #2a5fe0 40%, #1b4fd2);
}
.win-btn svg { width: 17px; height: 17px; }
.win-btn.close { background: linear-gradient(135deg, #f0a58c, #e2552f 40%, #c83a12); }

/* Menu bar */
.menubar {
  height: 20px;
  display: flex;
  align-items: center;
  gap: 11px;
  padding-left: 4px;
  border-bottom: 1px solid #fff;
}
.doc-icon { width: 16px; height: 16px; margin-right: -6px; }
.menu { height: 18px; white-space: nowrap; }
.menu span { font: 10px/14px var(--mono); }
.mdi-btns { display: flex; gap: 2px; margin-left: auto; padding-right: 1px; }
.mdi-btn {
  width: 16px;
  height: 16px;
  background: #f3f1e7;
  border: 1px solid #fff;
  border-right-color: #d4d0be;
  border-bottom-color: #d4d0be;
}
.mdi-btn svg { width: 14px; height: 14px; }

/* Toolbars */
.toolrow { height: 27px; display: flex; border-bottom: 1px solid #d0ccba; }
.toolrow + .toolrow { height: 28px; border-bottom-color: var(--shade); }
.toolbar {
  display: flex;
  align-items: center;
  padding: 0 3px;
  border-top: 1px solid #fff;
  border-right: 2px solid #c5c1af;
}
.toolbar .grip {
  width: 7px;
  height: 22px;
  margin-right: 3px;
  border: 1px solid #c9c5b2;
  border-left-color: #fff;
  border-width: 0 2px 0 2px;
  background: linear-gradient(90deg, #c9c5b2 1px, #fff 1px);
}
.tool { flex: none; width: 22px; height: 22px; }
.tool svg { width: 17px; height: 17px; }
.tool.tiny { width: 12px; }
.tool.tiny svg { width: 8px; height: 8px; }
.sep { width: 2px; height: 20px; margin: 0 3px; border-left: 1px solid #c5c1af; border-right: 1px solid #fff; }
.gap { width: 2px; }

.combo {
  display: flex;
  align-items: center;
  gap: 2px;
  height: 22px;
  padding: 1px 1px 1px 4px;
  background: #fff;
  border: 1px solid var(--field);
}
.combo > svg { flex: none; width: 14px; height: 14px; }
.combo select {
  flex: 1;
  min-width: 0;
  appearance: none;
  font: 10px/14px var(--mono);
  opacity: 1;
}
.combo .arrow, .sbtn {
  flex: none;
  display: flex;
  align-items: center;
  justify-content: center;
  background: linear-gradient(135deg, #dbe6ff, #b6c9f8);
  border: 1px solid #c3d0f2;
  border-radius: 2px;
}
.combo .arrow { width: 15px; height: 18px; }
.arrow svg, .sbtn svg { width: 10px; height: 10px; }
.w98 { width: 98px; }
.w118 { width: 118px; }
.w122 { width: 122px; }
.w146 { width: 146px; }
.w156 { width: 156px; }
.layer { width: 294px; }
.swatch { width: 10px; height: 10px; border: 1px solid #000; margin-right: 2px; }
.line { width: 34px; height: 1px; background: #000; margin-right: 2px; }
.line.long { width: 58px; }
.combo.off { padding-left: 6px; background: var(--face); border-color: #cbc7b6; color: #aca899; }
.combo.off .arrow { background: #ece9d8; border-color: #d9d5c4; opacity: 0.5; filter: grayscale(1); }

/* Workspace */
.workspace { flex: 1; display: flex; align-items: flex-start; min-height: 0; }
.palette {
  flex: none;
  width: 25px;
  display: flex;
  flex-direction: column;
  align-items: center;
  padding: 3px 0 4px;
  border-right: 2px solid #d0ccba;
  border-bottom: 1px solid var(--shade);
}
.palette .grip {
  width: 20px;
  height: 6px;
  margin-bottom: 1px;
  border: 0 solid #c9c5b2;
  border-bottom-width: 1px;
  background: linear-gradient(#fff 2px, #c9c5b2 2px, #c9c5b2 3px, #fff 3px);
}
/* icon rows run slightly under 22px on the long bars */
.draw .tool:nth-child(3n), .modify .tool:nth-child(3n) { height: 21px; }
.palette .tool svg { width: 16px; height: 16px; }
.tool.letter { font: 500 16px/20px "Open Sans", sans-serif; }
.hsep { width: 19px; height: 2px; margin: 1px 0 2px; border-top: 1px solid #c5c1af; border-bottom: 1px solid #fff; }

.doc {
  flex: 1;
  min-width: 0;
  align-self: stretch;
  margin: 0 2px 3px 0;
  display: flex;
  flex-direction: column;
  border-left: 2px solid #77756a;
  border-top: 1px solid #77756a;
  border-right: 1px solid #fff;
}
.view { flex: 1; min-height: 0; contain: size; display: flex; background: #000; }
.drawing { flex: 1; min-width: 0; height: 100%; }
.thin { fill: none; stroke: #fff; stroke-width: 1; }
.cross { fill: none; stroke: #aaa; stroke-width: 1; }
.dim-text { font: 100 39px Roboto, sans-serif; fill: #fff; }
.axis { font: 300 15px Roboto, sans-serif; fill: #fff; }

.sbtn { width: 16px; height: 16px; border-color: #fff; box-shadow: inset 0 0 0 1px #aec0ee; }
.vscroll {
  flex: none;
  width: 17px;
  display: flex;
  flex-direction: column;
  align-items: center;
  justify-content: space-between;
  background: linear-gradient(90deg, #f0efe8, #fefefb);
}
.thumb {
  width: 15px;
  height: 16px;
  background: repeating-linear-gradient(#9fb6ef 0 1px, #d5e0fd 1px 2px) center / 7px 7px no-repeat, #c0d0fb;
  border: 1px solid #9db3e8;
  border-radius: 2px;
}
.vscroll .thumb { margin-bottom: 79px; }

.tabs { flex: none; height: 15px; display: flex; background: var(--face); }
.nav {
  width: 18px;
  height: 15px;
  border-right: 1px solid #c5c1af;
  border-left: 1px solid #fff;
}
.nav svg { width: 10px; height: 10px; }
.tab { position: relative; width: 47px; height: 15px; margin-right: -3px; }
.tab svg { position: absolute; left: 0; top: 0; width: 100%; height: 100%; fill: none; stroke: #000; }
.tab span { position: relative; line-height: 12px; }
.tab.active { margin-left: 1px; width: 43px; color: #fff; font-weight: bold; }
.tab.active svg { fill: #000; }
.hscroll {
  width: 33%;
  margin-left: auto;
  margin-right: 17px;
  display: flex;
  align-items: center;
  justify-content: space-between;
  background: linear-gradient(#f0efe8, #fefefb);
}
.split { width: 4px; height: 13px; background: var(--face); border: 1px solid #c5c1af; }
.hscroll .sbtn { height: 14px; }
.hscroll .thumb { height: 13px; margin-left: auto; margin-right: 108px; }

/* Command window */
.command {
  flex: none;
  display: flex;
  padding: 7px 7px 0 6px;
  border-top: 1px solid #fff;
  background: linear-gradient(var(--face) 1px, #444 1px, #444 2px, var(--face) 2px);
}
.command .grip { width: 7px; height: 42px; margin: 2px 4px 0 0; background: linear-gradient(90deg, #fff 2px, #c5c1af 2px, #c5c1af 3px, #fff 3px, #fff 6px, #c5c1af 6px); }
.console { flex: 1; border-left: 1px solid #555; border-top: 1px solid #333; background: #fff; font-size: 15px; }
.history { display: flex; border-bottom: 1px solid var(--shade); }
.log { flex: 1; padding: 0 0 2px; }
.log p { line-height: 14px; white-space: pre; }
.command span { font: 13px/0 var(--mono); }
.log-scroll { width: 16px; }
.log-scroll .sbtn { height: 15px; }
.prompt { display: flex; align-items: center; height: 16px; background: linear-gradient(90deg, #fff calc(100% - 16px), var(--face) 0); }
.prompt label { line-height: 15px; }
.prompt input { flex: 1; min-width: 0; height: 14px; outline: none; font: 13px/14px var(--mono); }
.cmd-scroll { width: 66px; display: flex; align-items: center; margin-right: 16px; background: #f4f3ec; }
.cmd-scroll .sbtn { height: 14px; }
.cmd-scroll .thumb { width: 16px; height: 14px; }
.cmd-scroll .sbtn:last-child { margin-left: auto; }

/* Status bar */
.status {
  flex: none;
  display: flex;
  align-items: center;
  height: 24px;
  padding: 5px 1px 1px 6px;
  border-top: 1px solid #d8d5c8;
  background: linear-gradient(#b7b4a6 0, #dedbce 4px, var(--face) 5px, var(--face) 19px, #d8d4bd);
}
.status .height { width: 77px; white-space: nowrap; }
.status .height span { font: 10px/0 var(--mono); }
.coords {
  width: 246px;
  height: 18px;
  margin-right: 4px;
  padding-left: 1px;
  border: 1px solid #c5c1af;
  border-right-color: #fff;
  border-bottom-color: #fff;
  font: 10px/17px var(--mono);
  white-space: nowrap;
}
.mode {
  height: 18px;
  padding: 0 1px;
  margin-right: 4px;
  border: 1px solid #fff;
  border-right-color: #aca899;
  border-bottom-color: #aca899;
  white-space: nowrap;
}
.mode.on { border-color: #333 #fff #fff #333; }
.tray { margin-left: auto; display: flex; align-items: center; gap: 8px; }
.tray-icon { width: 24px; height: 18px; border: 1px solid #aca899; border-right-color: #fff; border-bottom-color: #fff; }
.tray-icon svg { width: 17px; height: 17px; }
.tray-menu svg { width: 8px; height: 8px; }
.resize { width: 12px; height: 12px; }

/* Watermark */
.mark {
  position: absolute;
  right: 40px;
  bottom: 18px;
  width: 190px;
  height: 90px;
  fill: #fff;
  fill-opacity: 0.85;
  stroke: #dcdcdc;
  stroke-width: 1;
  pointer-events: none;
}
.mark .brand { font: bold 38px "Liberation Sans", sans-serif; }
.mark .paw { font: bold 25px "Liberation Sans", sans-serif; }
.mark .cn { font: bold 31px var(--cjk); }
.mark .url { font: 600 19px "Open Sans", sans-serif; }
```
